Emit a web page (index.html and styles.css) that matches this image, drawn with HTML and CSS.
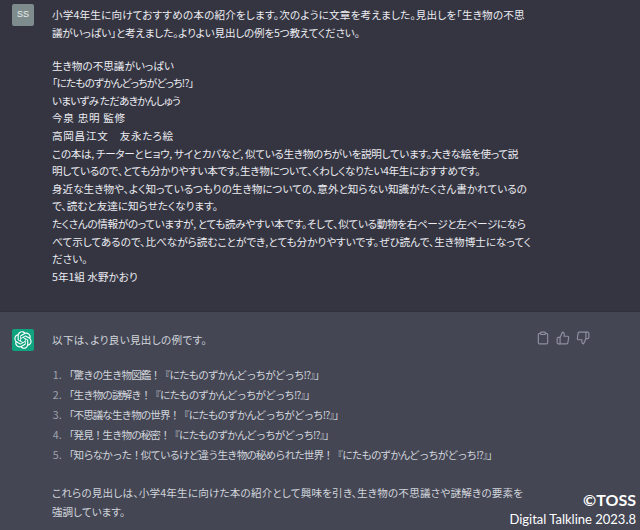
FILE: index.html
```html
<!DOCTYPE html>
<html lang="ja">
<head>
  <meta charset="UTF-8">
  <title>Chat</title>
  <link rel="stylesheet" href="styles.css">
</head>
<body>
  <div class="msg user-msg">
    <div class="avatar user-avatar">SS</div>
    <div class="msg-text">
      <p><span class="wide">小学4年生に向けておすすめの本の紹介をします。次のように文章を考えました。見出しを「生き物の不思</span><br><span class="tight-sm">議がいっぱい」と考えました。よりよい見出しの例を5つ教えてください。</span></p>
      <p class="blank">&nbsp;</p>
      <p>生き物の不思議がいっぱい</p>
      <p class="kana">「にたものずかんどっちがどっち!?」</p>
      <p class="kana">いまいずみ ただあきかんしゅう</p>
      <p class="kanji">今泉 忠明 監修</p>
      <p class="kanji">高岡昌江文　友永たろ絵</p>
      <p class="tight">この本は, チーターとヒョウ, サイとカバなど, 似ている生き物のちがいを説明しています。大きな絵を使って説<br>明しているので、とても分かりやすい本です。生き物について、くわしくなりたい4年生におすすめです。</p>
      <p>身近な生き物や、よく知っているつもりの生き物についての、意外と知らない知識がたくさん書かれているの<br>で、読むと友達に知らせたくなります。</p>
      <p><span class="tight">たくさんの情報がのっていますが, とても読みやすい本です。そして、似ている動物を右ページと左ページになら</span><br>べて示してあるので、比べながら読むことができ,とても分かりやすいです。ぜひ読んで、生き物博士になってく<br>ださい。</p>
      <p>5年1組 水野かおり</p>
    </div>
  </div>

  <div class="msg bot-msg">
    <div class="avatar bot-avatar">
      <svg viewBox="0 0 41 41" width="18" height="18" fill="#fff">
        <path d="M37.5324 16.8707C37.9808 15.5241 38.1363 14.0974 37.9886 12.6859C37.8409 11.2744 37.3934 9.91076 36.676 8.68622C35.6126 6.83404 33.9882 5.3676 32.0373 4.4985C30.0864 3.62941 27.9098 3.40259 25.8215 3.85078C24.8796 2.7893 23.7219 1.94125 22.4257 1.36341C21.1295 0.785575 19.7249 0.491269 18.3058 0.500197C16.1708 0.495044 14.0893 1.16803 12.3614 2.42214C10.6335 3.67624 9.34853 5.44666 8.6917 7.47815C7.30085 7.76286 5.98686 8.3414 4.8377 9.17505C3.68854 10.0087 2.73073 11.0782 2.02839 12.312C0.956464 14.1591 0.498905 16.2988 0.721698 18.4228C0.944492 20.5467 1.83612 22.5449 3.268 24.1293C2.81966 25.4759 2.66413 26.9026 2.81182 28.3141C2.95951 29.7256 3.40701 31.0892 4.12437 32.3138C5.18791 34.1659 6.8123 35.6322 8.76321 36.5013C10.7141 37.3704 12.8907 37.5973 14.9789 37.1492C15.9208 38.2107 17.0786 39.0587 18.3747 39.6366C19.6709 40.2144 21.0755 40.5087 22.4946 40.4998C24.6307 40.5054 26.7133 39.8321 28.4418 38.5772C30.1704 37.3223 31.4556 35.5506 32.1119 33.5179C33.5027 33.2332 34.8167 32.6547 35.9659 31.821C37.115 30.9874 38.0728 29.9178 38.7752 28.684C39.8458 26.8371 40.3023 24.6979 40.0789 22.5748C39.8556 20.4517 38.9639 18.4544 37.5324 16.8707ZM22.4978 37.8849C20.7443 37.8874 19.0459 37.2733 17.6994 36.1501C17.7601 36.117 17.8666 36.0586 17.936 36.0161L25.9004 31.4156C26.1003 31.3019 26.2663 31.137 26.3813 30.9378C26.4964 30.7386 26.5563 30.5124 26.5549 30.2825V19.0542L29.9213 20.998C29.9389 21.0068 29.9541 21.0198 29.9656 21.0359C29.977 21.052 29.9842 21.0707 29.9867 21.0902V30.3889C29.9842 32.375 29.1946 34.2791 27.7909 35.6841C26.3872 37.0892 24.4838 37.8806 22.4978 37.8849ZM6.39227 31.0064C5.51397 29.4888 5.19742 27.7107 5.49804 25.9832C5.55718 26.0187 5.66048 26.0818 5.73461 26.1244L13.699 30.7248C13.8975 30.8408 14.1233 30.902 14.3532 30.902C14.583 30.902 14.8088 30.8408 15.0073 30.7248L24.731 25.1103V28.9979C24.7321 29.0177 24.7283 29.0376 24.7199 29.0556C24.7115 29.0736 24.6988 29.0893 24.6829 29.1012L16.6317 33.7497C14.9096 34.7416 12.8643 35.0097 10.9447 34.4954C9.02506 33.9811 7.38785 32.7263 6.39227 31.0064ZM4.29707 13.6194C5.17156 12.0998 6.55279 10.9364 8.19885 10.3327C8.19885 10.4013 8.19491 10.5228 8.19491 10.6071V19.808C8.19351 20.0378 8.25334 20.2638 8.36823 20.4629C8.48312 20.6619 8.64893 20.8267 8.84863 20.9404L18.5723 26.5542L15.206 28.4979C15.1894 28.5089 15.1703 28.5155 15.1505 28.5173C15.1307 28.5191 15.1107 28.516 15.0924 28.5082L7.04046 23.8557C5.32135 22.8601 4.06716 21.2235 3.55289 19.3046C3.03862 17.3858 3.30624 15.3413 4.29707 13.6194ZM31.955 20.0556L22.2312 14.4411L25.5976 12.4981C25.6142 12.4872 25.6333 12.4805 25.6531 12.4787C25.6729 12.4769 25.6928 12.4801 25.7111 12.4879L33.7631 17.1364C34.9967 17.849 36.0017 18.8982 36.6606 20.1613C37.3194 21.4244 37.6047 22.849 37.4832 24.2684C37.3617 25.6878 36.8382 27.0432 35.9743 28.1759C35.1103 29.3086 33.9415 30.1717 32.6047 30.6641C32.6047 30.5947 32.6047 30.4733 32.6047 30.3889V21.188C32.6066 20.9586 32.5474 20.7328 32.4332 20.5338C32.319 20.3348 32.154 20.1698 31.955 20.0556ZM35.3055 15.0128C35.2464 14.9765 35.1431 14.9142 35.069 14.8717L27.1045 10.2712C26.906 10.1554 26.6803 10.0943 26.4504 10.0943C26.2206 10.0943 25.9948 10.1554 25.7963 10.2712L16.0726 15.8858V11.9982C16.0715 11.9783 16.0753 11.9585 16.0837 11.9405C16.0921 11.9225 16.1048 11.9068 16.1207 11.8949L24.1719 7.25025C25.4053 6.53903 26.8158 6.19376 28.2383 6.25482C29.6608 6.31589 31.0364 6.78077 32.2044 7.59508C33.3723 8.40939 34.2842 9.53945 34.8334 10.8531C35.3826 12.1667 35.5464 13.6095 35.3055 15.0128ZM14.2424 21.9419L10.8752 19.9981C10.8576 19.9893 10.8423 19.9763 10.8309 19.9602C10.8195 19.9441 10.8122 19.9254 10.8098 19.9058V10.6071C10.8107 9.18295 11.2173 7.78848 11.9819 6.58696C12.7466 5.38544 13.8377 4.42659 15.1275 3.82264C16.4173 3.21869 17.8524 2.99464 19.2649 3.1767C20.6775 3.35876 22.0089 3.93941 23.1034 4.85067C23.0427 4.88379 22.937 4.94215 22.8668 4.98473L14.9024 9.58517C14.7025 9.69878 14.5366 9.86356 14.4215 10.0626C14.3065 10.2616 14.2466 10.4877 14.2479 10.7175L14.2424 21.9419ZM16.071 17.9991L20.4018 15.4978L24.7325 17.9975V22.9985L20.4018 25.4983L16.071 22.9985V17.9991Z"/>
      </svg>
    </div>
    <div class="msg-text">
      <p class="intro">以下は、より良い見出しの例です。</p>
      <ol class="answers">
        <li>「驚きの生き物図鑑！『にたものずかんどっちがどっち!?』」</li>
        <li>「生き物の謎解き！『にたものずかんどっちがどっち!?』」</li>
        <li>「不思議な生き物の世界！『にたものずかんどっちがどっち!?』」</li>
        <li>「発見！生き物の秘密！『にたものずかんどっちがどっち!?』」</li>
        <li>「知らなかった！似ているけど違う生き物の秘められた世界！『にたものずかんどっちがどっち!?』」</li>
      </ol>
      <p class="summary"><span class="wide">これらの見出しは、小学4年生に向けた本の紹介として興味を引き、生き物の不思議さや謎解きの要素を</span><br>強調しています。</p>
    </div>
    <div class="actions">
      <svg viewBox="0 0 24 24" width="14" height="14"><path d="M16 4h2a2 2 0 0 1 2 2v14a2 2 0 0 1-2 2H6a2 2 0 0 1-2-2V6a2 2 0 0 1 2-2h2"/><rect x="8" y="2" width="8" height="4" rx="1"/></svg>
      <svg viewBox="0 0 24 24" width="14" height="14"><path d="M14 9V5a3 3 0 0 0-3-3l-4 9v11h11.3a2 2 0 0 0 2-1.7l1.4-9a2 2 0 0 0-2-2.3z"/><path d="M7 22H4a2 2 0 0 1-2-2v-7a2 2 0 0 1 2-2h3"/></svg>
      <svg viewBox="0 0 24 24" width="14" height="14"><path d="M10 15v4a3 3 0 0 0 3 3l4-9V2H5.7a2 2 0 0 0-2 1.7l-1.4 9a2 2 0 0 0 2 2.3z"/><path d="M17 2h3a2 2 0 0 1 2 2v7a2 2 0 0 1-2 2h-3"/></svg>
    </div>
  </div>

  <div class="credit">
    <div class="credit-main">©TOSS</div>
    <div class="credit-sub">Digital Talkline 2023.8</div>
  </div>
</body>
</html>
```

FILE: styles.css
```css
body {
  margin: 0;
  width: 640px;
  height: 530px;
  overflow: hidden;
  position: relative;
  font-family: "Noto Sans CJK JP", "Noto Sans", sans-serif;
  font-size: 10.6px;
  font-feature-settings: "palt";
  line-height: 17.6px;
  background-color: #444654;
}
p {
  margin: 0;
}
.msg {
  display: flex;
  padding-left: 12px;
}
.user-msg {
  height: 312px;
  box-sizing: border-box;
  padding-top: 6px;
  background-color: #343541;
  border-bottom: 1px solid #2f303a;
  color: #ececf1;
}
.bot-msg {
  height: 218px;
  box-sizing: border-box;
  padding-top: 19px;
  color: #d1d5db;
  position: relative;
}
.blank {
  height: 15.5px;
}
.wide {
  letter-spacing: 0.17px;
}
.tight {
  letter-spacing: -0.33px;
}
.tight-sm {
  letter-spacing: -0.2px;
}
.kana {
  letter-spacing: -0.75px;
}
.kanji {
  letter-spacing: 0.7px;
}
.avatar {
  width: 22px;
  height: 22px;
  margin-top: -2px;
  margin-right: 18px;
  flex-shrink: 0;
  display: flex;
  align-items: center;
  justify-content: center;
  border-radius: 2px;
}
.user-avatar {
  background-color: #7f8c8d;
  color: #e8ecec;
  font-family: "Liberation Sans", sans-serif;
  font-size: 9px;
}
.bot-avatar {
  background-color: #10a37f;
}
.msg-text {
  white-space: nowrap;
}
.intro {
  margin-bottom: 16px;
  letter-spacing: 0.3px;
}
.answers {
  margin: 0 0 17px;
  padding: 0 0 0 12px;
  line-height: 20.2px;
  font-feature-settings: normal;
  letter-spacing: -1px;
}
.answers li::marker {
  color: #a0a2ae;
  letter-spacing: 0;
}
.summary {
  line-height: 19px;
}
.actions {
  position: absolute;
  top: 19px;
  left: 536px;
  display: flex;
  gap: 6px;
}
.actions svg {
  fill: none;
  stroke: #8e8ea0;
  stroke-width: 2;
}
.credit {
  position: absolute;
  right: 4px;
  bottom: 2px;
  text-align: right;
  color: #fff;
}
.credit-main {
  font-family: "Lato", sans-serif;
  font-size: 16px;
  font-weight: 700;
  line-height: 21px;
}
.credit-sub {
  font-family: "Lato", sans-serif;
  font-size: 13px;
  line-height: 18px;
}
```
